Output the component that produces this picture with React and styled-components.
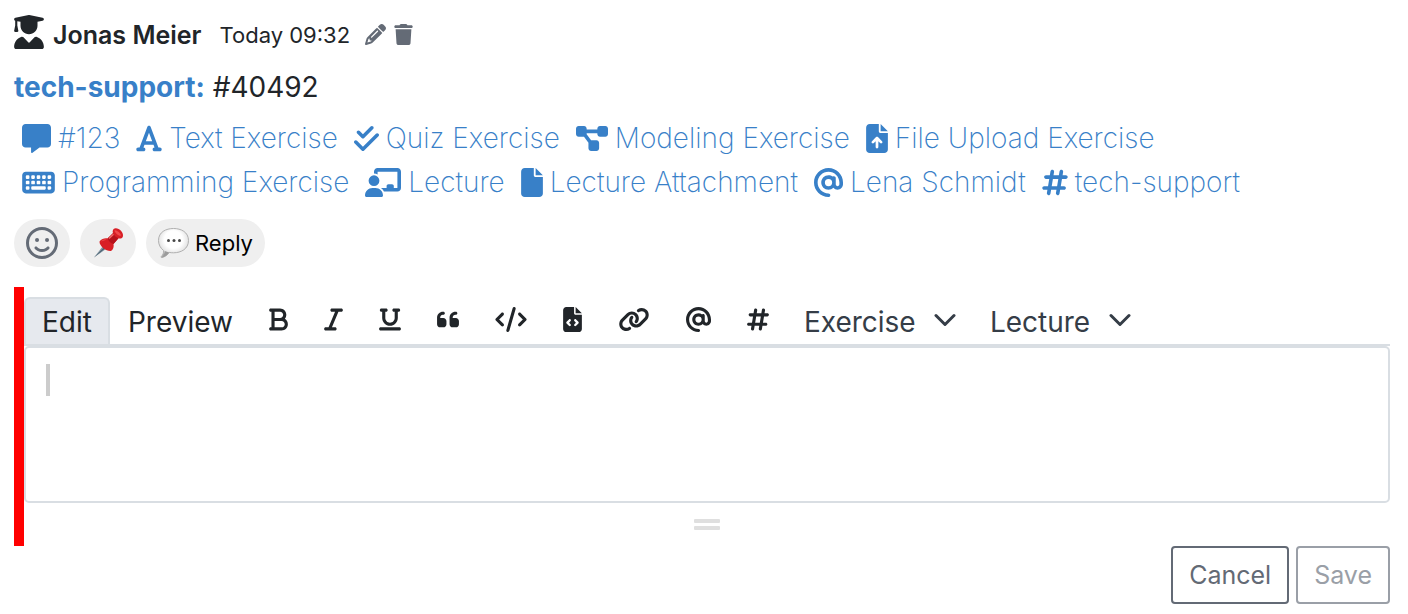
import React from 'react';
import styled, { createGlobalStyle } from 'styled-components';
import {
  FaUserGraduate, FaPencil, FaTrash, FaMessage, FaFont, FaCheckDouble, FaDiagramProject,
  FaFileArrowUp, FaKeyboard, FaChalkboardUser, FaFile, FaAt, FaHashtag, FaRegFaceSmile,
  FaBold, FaItalic, FaUnderline, FaQuoteLeft, FaCode, FaFileCode, FaLink,
} from 'react-icons/fa6';

const Global = createGlobalStyle`
  *, *::before, *::after { box-sizing: border-box; }
  body {
    margin: 0;
    background: #fff;
    color: #212529;
    font-family: Inter, "Liberation Sans", sans-serif;
  }
  button, select, textarea { font: inherit; color: inherit; margin: 0; }
  button { cursor: pointer; }
  svg { display: block; flex: none; }
`;

const Post = styled.article`
  padding: 14px 18px 10px 14px;
`;

const Header = styled.header`
  display: flex;
  align-items: center;
  height: 42px;
  > svg { height: 34px; width: 30px; margin: 0 9px 6px 0; }
`;

const Author = styled.span`
  font-size: 25px;
  font-weight: 600;
  line-height: 42px;
  margin-right: 18px;
`;

const Time = styled.time`
  font-size: 22px;
  line-height: 42px;
  margin-right: 15px;
`;

const IconButton = styled.button`
  display: flex;
  padding: 0;
  margin-right: 8px;
  border: 0;
  background: none;
  color: #646b76;
  svg { height: 21px; width: ${(p) => p.$width}px; margin-bottom: 2px; }
`;

const Title = styled.p`
  margin: 8px 0 0;
  font-size: 28px;
  line-height: 46px;
`;

const Channel = styled.a`
  color: #3880c8;
  font-weight: 700;
  text-decoration: none;
`;

const References = styled.nav`
  display: flex;
  flex-wrap: wrap;
  column-gap: 16px;
  padding: 6px 8px 0;
`;

const Reference = styled.a`
  display: flex;
  align-items: center;
  gap: 7px;
  color: #3880c8;
  font-size: 28px;
  font-weight: 200;
  line-height: 44px;
  text-decoration: none;
  white-space: nowrap;
  svg { height: 29px; width: ${(p) => p.$width}px; }
`;

const Reactions = styled.div`
  display: flex;
  gap: 10px;
  margin-top: 15px;
`;

const Pill = styled.button`
  display: flex;
  align-items: center;
  gap: 6px;
  height: 48px;
  padding: 0 12px;
  border: 0;
  border-radius: 24px;
  background: #efefef;
  color: #000;
  font-size: 22px;
`;

const Editor = styled.section`
  margin-top: 20px;
  padding: 10px 0 16px;
  border-left: 10px solid #f00;
`;

const Toolbar = styled.div`
  display: flex;
  align-items: stretch;
  height: 49px;
  border-bottom: 2px solid #d9dee3;
`;

const Tab = styled.button`
  padding: 0 16px;
  border: 2px solid ${(p) => (p.$active ? '#d9dee3' : 'transparent')};
  border-bottom: 0;
  border-radius: 6px 6px 0 0;
  background: ${(p) => (p.$active ? '#e6e9ee' : 'none')};
  font-size: 28px;
`;

const Tool = styled.button`
  display: flex;
  align-items: center;
  padding: 0 18px;
  border: 0;
  background: none;
  svg { height: 25px; width: ${(p) => p.$width}px; margin-bottom: 2px; }
`;

const Dropdown = styled.label`
  display: flex;
  align-items: center;
  gap: 18px;
  padding: 4px 17px 2px;
  color: #353d47;
  font-size: 28px;
  svg { margin-bottom: 4px; }
`;

const Select = styled.select`
  appearance: none;
  padding: 0;
  border: 0;
  background: none;
`;

const Field = styled.div`
  position: relative;
`;

const TextArea = styled.textarea`
  display: block;
  width: 100%;
  height: 157px;
  padding: 14px 20px;
  border: 2px solid #d9dee3;
  border-radius: 5px;
  outline: 0;
  resize: none;
  font-size: 28px;
`;

const Caret = styled.span`
  position: absolute;
  left: 22px;
  top: 18px;
  width: 4px;
  height: 32px;
  background: #ccc;
  pointer-events: none;
`;

const Grip = styled.div`
  display: flex;
  flex-direction: column;
  gap: 3px;
  width: 26px;
  margin: 16px auto 0;
  &::before, &::after {
    content: '';
    height: 4px;
    border-radius: 1px;
    background: #dfdfdf;
  }
`;

const Actions = styled.footer`
  display: flex;
  justify-content: flex-end;
  gap: 7px;
`;

const ActionButton = styled.button`
  height: 58px;
  padding: 0 16px;
  border: 2px solid #636a75;
  border-radius: 4px;
  background: #fff;
  color: #636a75;
  font-size: 25px;
  &:disabled { border-color: #9a9fa7; color: #9a9fa7; cursor: default; }
`;

const Chevron = () => (
  <svg width="22" height="14" viewBox="0 0 22 14" aria-hidden="true">
    <path d="m2 2.500 9 9 9-9" fill="none" stroke="#353d47" strokeWidth="3" strokeLinecap="round" strokeLinejoin="round" />
  </svg>
);

const Pushpin = () => (
  <svg width="32" height="32" viewBox="0 0 32 32" aria-hidden="true">
    <path d="M2 30.500 11 19l3 3z" fill="#8496a3" />
    <path d="m2 30.500 10-10 1 1z" fill="#46606f" />
    <path d="M7.500 14.500c2-3 6-3.500 8-3L21 6c-.8-2 .1-4.500 2.500-4.700 3.800-.3 8 4.200 7.500 7.600-.4 2.300-2.600 3-4.500 2.300L21.500 17c.6 2.800-.2 5.600-2.500 7-4.500.5-11.800-5-11.500-9.500z" fill="#d81f26" />
    <path d="m15.500 11.500 5.700-5.300c.8 2.200 2.600 4 5.300 5L21.500 17c-2.600-.7-5-3-6-5.500z" fill="#b5121b" />
    <path d="M22.500 3.500c1-1.500 6.500 2.500 6.500 5-1 1.500-6.500-2.500-6.500-5zM9 14.500c1.500-2 4-2.200 5.500-1.800" fill="#f04a4c" />
    <path d="m17 11.500 4.500-4.200" stroke="#f36a69" strokeWidth="1.500" />
  </svg>
);

const SpeechBalloon = () => (
  <svg width="31" height="32" viewBox="0 0 31 32" aria-hidden="true">
    <defs>
      <radialGradient id="balloon" cx=".5" cy=".38" r=".6">
        <stop offset=".5" stopColor="#fff" />
        <stop offset=".8" stopColor="#e6e6e6" />
        <stop offset="1" stopColor="#a8a8a8" />
      </radialGradient>
    </defs>
    <path d="M15.500 1.500C23 1.500 30.500 5 30.500 13.500S23 25.800 15.500 25.800c-1.600 0-3-.1-4.300-.4-1.700 2.400-4.300 4.700-7.400 5.100-.8.100-1-.6-.4-1.100 1.700-1.500 2.300-3.700 2.200-5.900C2.800 21.500.5 18 .5 13.500.5 5 8 1.500 15.500 1.500z" fill="url(#balloon)" stroke="#b0b0b0" />
    <path d="M3.800 30.500c3.100-.4 5.700-2.700 7.400-5.100l-4.500-1.500c.1 2.500-.9 5-2.900 6.600z" fill="#9c9c9c" />
    <g fill="#484848"><circle cx="10.500" cy="13.500" r="1.500" /><circle cx="16" cy="13.500" r="1.500" /><circle cx="21.500" cy="13.500" r="1.500" /></g>
  </svg>
);

const references = [
  [FaMessage, '#123', 29],
  [FaFont, 'Text Exercise', 26],
  [FaCheckDouble, 'Quiz Exercise', 25],
  [FaDiagramProject, 'Modeling Exercise', 32],
  [FaFileArrowUp, 'File Upload Exercise', 22],
  [FaKeyboard, 'Programming Exercise', 33],
  [FaChalkboardUser, 'Lecture', 36],
  [FaFile, 'Lecture Attachment', 22],
  [FaAt, 'Lena Schmidt', 29],
  [FaHashtag, 'tech-support', 26],
];

const tools = [
  [FaBold, 'Bold', 19],
  [FaItalic, 'Italic', 19],
  [FaUnderline, 'Underline', 22],
  [FaQuoteLeft, 'Quote', 22],
  [FaCode, 'Code', 32],
  [FaFileCode, 'Code block', 19],
  [FaLink, 'Link', 32],
  [FaAt, 'Mention user', 25],
  [FaHashtag, 'Mention channel', 22],
];

export default function App() {
  return (
    <Post>
      <Global />
      <Header>
        <FaUserGraduate />
        <Author>Jonas Meier</Author>
        <Time>Today 09:32</Time>
        <IconButton $width={21} aria-label="Edit post"><FaPencil /></IconButton>
        <IconButton $width={19} aria-label="Delete post"><FaTrash /></IconButton>
      </Header>
      <Title><Channel href="#channel">tech-support:</Channel> #40492</Title>
      <References>
        {references.map(([Icon, label, width]) => (
          <Reference key={label} href="#reference" $width={width}><Icon />{label}</Reference>
        ))}
      </References>
      <Reactions>
        <Pill aria-label="Add reaction"><FaRegFaceSmile size={32} color="#646b76" /></Pill>
        <Pill aria-label="Pin"><Pushpin /></Pill>
        <Pill><SpeechBalloon />Reply</Pill>
      </Reactions>
      <Editor>
        <Toolbar>
          <Tab $active>Edit</Tab>
          <Tab>Preview</Tab>
          {tools.map(([Icon, label, width]) => (
            <Tool key={label} aria-label={label} $width={width}><Icon /></Tool>
          ))}
          {['Exercise', 'Lecture'].map((label) => (
            <Dropdown key={label}>
              <Select aria-label={label}><option>{label}</option></Select>
              <Chevron />
            </Dropdown>
          ))}
        </Toolbar>
        <Field>
          <TextArea aria-label="Message" />
          <Caret />
        </Field>
        <Grip />
      </Editor>
      <Actions>
        <ActionButton>Cancel</ActionButton>
        <ActionButton disabled>Save</ActionButton>
      </Actions>
    </Post>
  );
}
